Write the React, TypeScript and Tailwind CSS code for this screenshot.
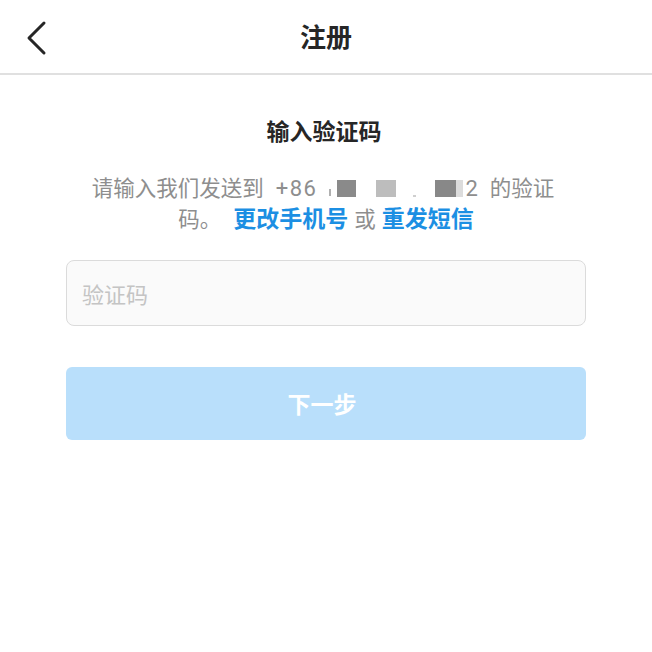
import React from "react";

const font = { fontFamily: '"Noto Sans CJK SC", "Noto Sans", sans-serif' };
const latin = { fontFamily: 'Roboto, "Noto Sans", sans-serif' };

function Block({ w, c, ml = 0 }: { w: number; c: string; ml?: number }) {
  return (
    <span
      className="inline-block align-middle h-[17px] -mt-[3px]"
      style={{ width: w, backgroundColor: c, marginLeft: ml }}
    />
  );
}

export default function App() {
  return (
    <div className="w-[652px] h-[652px] bg-white" style={font}>
      <header className="relative h-[75px] flex items-center justify-center border-b-2 border-[#e0e0e0]">
        <button className="absolute left-[20px] top-[18px] w-[32px] h-[40px] flex items-center justify-center">
          <svg width="24" height="36" viewBox="0 0 24 36" fill="none">
            <path
              d="M20 3 L5 18 L20 33"
              stroke="#262626"
              strokeWidth="3"
              strokeLinecap="round"
              strokeLinejoin="round"
            />
          </svg>
        </button>
        <h1 className="text-[26px] font-bold text-[#262626] leading-none -mt-[2px]">注册</h1>
      </header>

      <main className="px-[66px] pt-[40px] flex flex-col">
        <h2 className="text-center text-[23px] font-bold text-[#262626] leading-[30px] -ml-[4px]">
          输入验证码
        </h2>
        <div className="mt-[27px] text-center text-[21.5px] leading-[30px] text-[#8e8e8e]">
          <div className="whitespace-nowrap h-[30px] -ml-[6px]">
            <span>请输入我们发送到</span>
            <span className="ml-[12px] text-[22px] tracking-[1.5px]" style={latin}>+86</span>
            <span className="inline-block align-middle w-[2px] h-[7px] bg-[#b0b0b0] ml-[12px] mt-[4px]" />
            <Block w={19} c="#8a8a8a" ml={6} />
            <Block w={20} c="#bdbdbd" ml={20} />
            <span className="inline-block align-middle w-[3px] h-[2px] bg-[#cfcfcf] ml-[17px] mt-[12px]" />
            <Block w={21} c="#888888" ml={19} />
            <Block w={7} c="#dcdcdc" />
            <span className="ml-[2px] text-[22px]" style={latin}>2</span>
            <span className="ml-[12px]">的验证</span>
          </div>
          <div className="whitespace-nowrap h-[30px]">
            <span>码。</span>
            <span className="ml-[12px] font-bold text-[23px] text-[#1c8fe3]">更改手机号</span>
            <span className="ml-[6px]">或</span>
            <span className="ml-[6px] font-bold text-[23px] text-[#1c8fe3]">重发短信</span>
          </div>
        </div>

        <input
          className="mt-[28px] h-[66px] w-full rounded-[8px] border border-[#dbdbdb] bg-[#fafafa] px-[15px] text-[22px] text-[#262626] placeholder:text-[#c4c4c4] outline-none"
          placeholder="验证码"
          style={font}
        />

        <button className="mt-[41px] h-[73px] w-full rounded-[6px] bg-[#b9dffb] text-white text-[23px] font-bold">
          <span className="-ml-[8px]">下一步</span>
        </button>
      </main>
    </div>
  );
}
